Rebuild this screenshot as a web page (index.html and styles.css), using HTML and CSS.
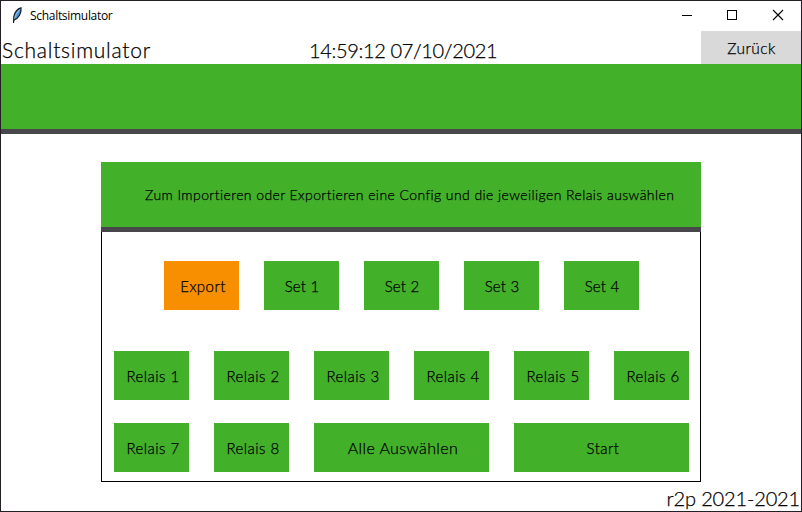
FILE: index.html
```
<!DOCTYPE html>
<html lang="de">
<head>
<meta charset="utf-8">
<title>Schaltsimulator</title>
<link rel="stylesheet" href="styles.css">
</head>
<body>
<div class="window">
  <div class="titlebar">
    <svg class="feather" width="12" height="17" viewBox="0 0 12 17">
      <path d="M10 .8C6.500 1.500 3.500 5.500 2.800 9.500L3 13C7.500 11.500 10.500 6.500 10 .8Z" fill="#4f8fd6" stroke="#16222f" stroke-width="1.300"/>
      <path d="M8.800 2.500C6 5.500 4.500 9 3 12.500" fill="none" stroke="#b9d5f0" stroke-width=".7"/>
      <path d="M3 11.500L2.500 16" fill="none" stroke="#111" stroke-width="1.200"/>
    </svg>
    <span class="caption">Schaltsimulator</span>
    <div class="controls">
      <svg width="46" height="30" viewBox="0 0 46 30" shape-rendering="crispEdges"><path d="M18 14.500h10" stroke="#000"/></svg>
      <svg width="46" height="30" viewBox="0 0 46 30" shape-rendering="crispEdges"><rect x="17.500" y="9.500" width="9" height="9" fill="none" stroke="#000"/></svg>
      <svg width="46" height="30" viewBox="0 0 46 30"><path d="M17 9l10 10M27 9l-10 10" stroke="#000" stroke-width="1.100"/></svg>
    </div>
  </div>
  <header class="header">
    <span class="name">Schaltsimulator</span>
    <span class="clock">14:59:12 07/10/2021</span>
    <button class="back">Zurück</button>
  </header>
  <div class="banner"></div>
  <main class="panel">
    <div class="message"><span>Zum Importieren oder Exportieren eine Config und die jeweiligen Relais auswählen</span></div>
    <div class="board">
      <div class="sets">
        <button class="key export">Export</button>
        <button class="key set">Set 1</button>
        <button class="key set">Set 2</button>
        <button class="key set">Set 3</button>
        <button class="key set">Set 4</button>
      </div>
      <div class="relays">
        <button class="key">Relais 1</button>
        <button class="key">Relais 2</button>
        <button class="key">Relais 3</button>
        <button class="key">Relais 4</button>
        <button class="key">Relais 5</button>
        <button class="key">Relais 6</button>
        <button class="key">Relais 7</button>
        <button class="key">Relais 8</button>
        <button class="key wide all">Alle Auswählen</button>
        <button class="key wide start">Start</button>
      </div>
    </div>
  </main>
  <footer class="footer"><span>r2p 2021-2021</span></footer>
</div>
</body>
</html>
```
FILE: styles.css
```
* { box-sizing: border-box; }
body {
  margin: 0;
  font-family: Lato, sans-serif;
  font-weight: 300;
  color: #000;
  -webkit-text-stroke: 0.25px #000;
}
button {
  border: 0;
  padding: 0;
  font: inherit;
  color: inherit;
  white-space: nowrap;
}
.window {
  width: 802px;
  height: 512px;
  border: 1px solid #231f24;
  background: #fff;
  display: flex;
  flex-direction: column;
}
.titlebar {
  height: 30px;
  display: flex;
  align-items: center;
  padding-left: 10px;
}
.feather { margin-top: -2px; }
.caption {
  margin-left: 7px;
  font: 12px/28px "Open Sans", sans-serif;
  letter-spacing: -0.3px;
  -webkit-text-stroke: 0;
}
.controls { margin-left: auto; display: flex; margin-right: -1px; }
.header {
  height: 33px;
  display: grid;
  grid-template-columns: 308px 392px 100px;
  font-size: 20px;
  line-height: 38px;
  white-space: nowrap;
}
.name { padding-left: 1px; font-size: 21px; letter-spacing: 0.75px; }
.clock { letter-spacing: -0.35px; }
.back {
  background: #d9d9d9;
  font-size: 15.5px;
  line-height: 33px;
  padding: 0 0 4px 1px;
  letter-spacing: 0.4px;
}
.banner {
  height: 70px;
  background: #43b02a;
  border-bottom: 5px solid #48474c;
}
.panel {
  width: 600px;
  height: 320px;
  margin: 28px 0 0 100px;
}
.message {
  height: 70px;
  padding-left: 44px;
  background: #43b02a;
  border-bottom: 5px solid #48474c;
  font-size: 14px;
  line-height: 66px;
  letter-spacing: 0.41px;
  white-space: nowrap;
}
.board {
  height: 250px;
  border: 1px solid #000;
  border-top: 0;
  padding: 29px 0 0 12px;
}
.sets { display: flex; gap: 25px; padding-left: 50px; }
.relays {
  margin-top: 41px;
  display: grid;
  grid-template-columns: repeat(6, 75px);
  gap: 23px 25px;
}
.key {
  width: 75px;
  height: 49px;
  padding: 0 0 0 3px;
  background: #43b02a;
  font-size: 15px;
  letter-spacing: 0.45px;
}
.export { background: #f78f00; }
.set { padding-left: 1px; letter-spacing: 0.2px; }
.wide { grid-column: span 2; width: 175px; }
.all { font-size: 16px; letter-spacing: 0.4px; }
.footer {
  height: 29px;
  text-align: right;
  padding-right: 1px;
  font-size: 20px;
  line-height: 32px;
  letter-spacing: -0.15px;
}
```
